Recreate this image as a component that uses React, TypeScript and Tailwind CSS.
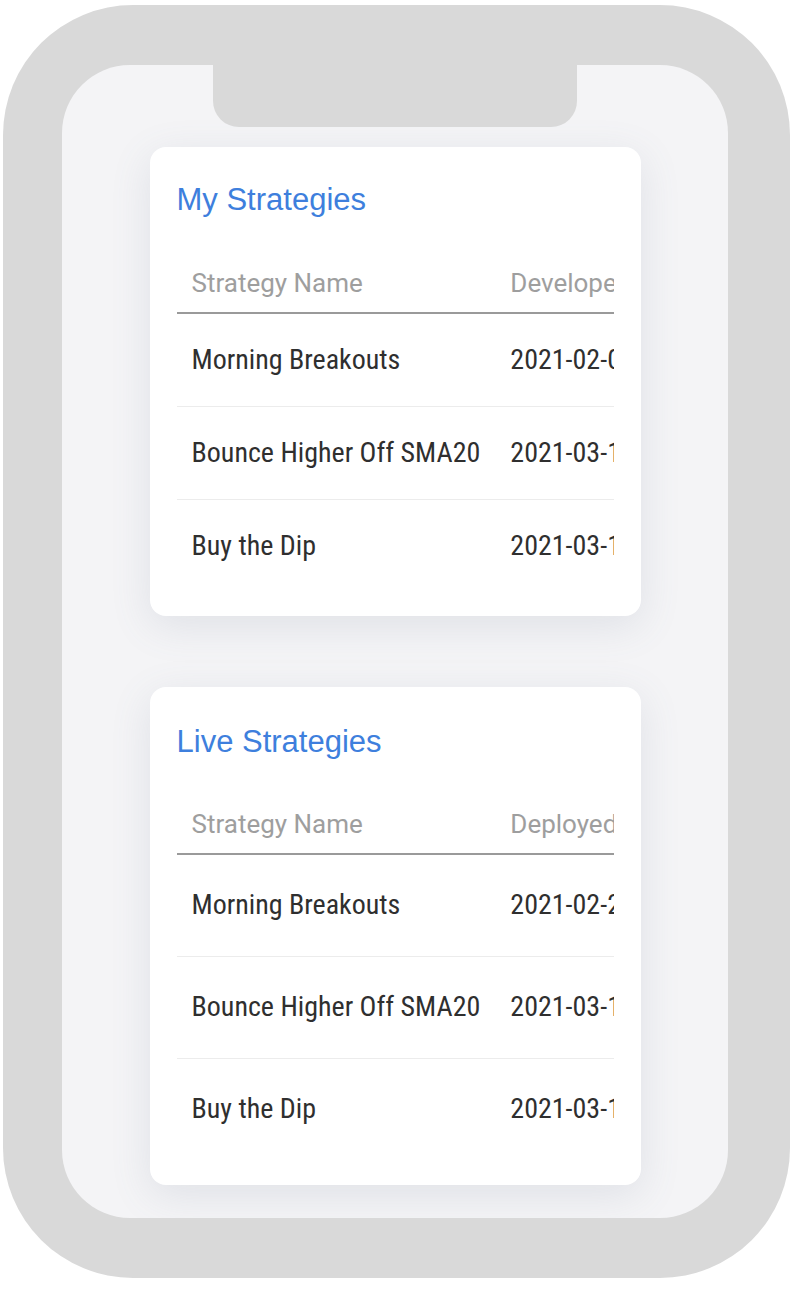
const myStrategies = [
  { name: "Morning Breakouts", date: "2021-02-03" },
  { name: "Bounce Higher Off SMA20", date: "2021-03-12" },
  { name: "Buy the Dip", date: "2021-03-15" },
];

const liveStrategies = [
  { name: "Morning Breakouts", date: "2021-02-24" },
  { name: "Bounce Higher Off SMA20", date: "2021-03-16" },
  { name: "Buy the Dip", date: "2021-03-18" },
];

function StrategyCard({
  title,
  dateLabel,
  rows,
  tall,
}: {
  title: string;
  dateLabel: string;
  rows: { name: string; date: string }[];
  tall?: boolean;
}) {
  return (
    <section
      className={`w-[491px] shrink-0 rounded-[16px] bg-white px-[27px] shadow-[0_10px_40px_rgba(100,116,139,0.14)] ${
        tall ? "pt-[37px] pb-[25px]" : "pt-[35px] pb-[24px]"
      }`}
    >
      <h2 className="h-[36px] font-['Liberation_Sans',Arial,sans-serif] text-[31px] leading-[36px] text-[#3e7fdd]">
        {title}
      </h2>
      <div className={`w-[437px] overflow-hidden ${tall ? "mt-[36px]" : "mt-[37px]"}`}>
        <table className="min-w-full border-collapse whitespace-nowrap">
          <thead>
            <tr className="h-[58px] border-b-2 border-[#9a9a9a] text-left font-['Roboto',sans-serif] text-[26px] font-normal text-[#9e9e9e]">
              <th className="px-[15px] font-normal">Strategy Name</th>
              <th className="px-[15px] font-normal">{dateLabel}</th>
            </tr>
          </thead>
          <tbody className="font-['Roboto_Condensed','Roboto',sans-serif] text-[28px] text-[#2f2f2f] font-stretch-condensed">
            {rows.map((r, i) => (
              <tr
                key={r.name}
                className={`${tall ? "h-[102px]" : "h-[93px]"} ${
                  i < rows.length - 1 ? "border-b border-[#ececec]" : ""
                }`}
              >
                <td className="px-[15px]">{r.name}</td>
                <td className="px-[15px]">{r.date}</td>
              </tr>
            ))}
          </tbody>
        </table>
      </div>
    </section>
  );
}

export default function App() {
  return (
    <div className="min-h-[1289px] w-[802px] bg-white pl-[3px] pt-[5px]">
      <div className="relative h-[1273px] w-[787px] rounded-[130px] bg-[#d9d9d9] p-[60px] pl-[59px] pr-[62px]">
        <div className="flex h-full flex-col items-center gap-[71px] overflow-hidden rounded-[68px] bg-[#f4f4f6] pt-[82px]">
          <StrategyCard title="My Strategies" dateLabel="Developed On" rows={myStrategies} />
          <StrategyCard title="Live Strategies" dateLabel="Deployed On" rows={liveStrategies} tall />
        </div>
        {/* notch */}
        <div className="absolute top-[60px] left-[210px] h-[62px] w-[364px] rounded-b-[26px] bg-[#d9d9d9]" />
      </div>
    </div>
  );
}
